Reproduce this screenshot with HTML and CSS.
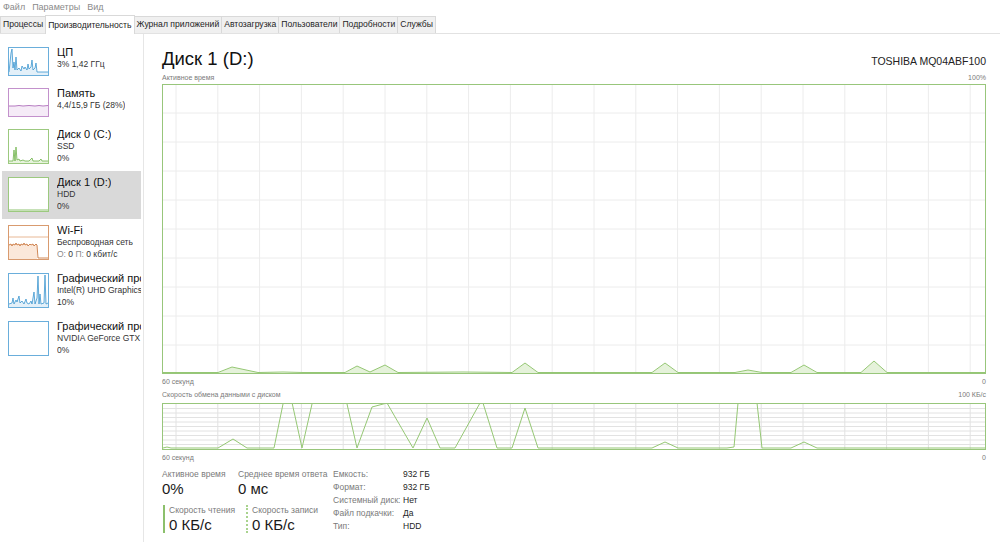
FILE: index.html
```html
<!DOCTYPE html>
<html lang="ru">
<head>
<meta charset="utf-8">
<title>Диспетчер задач</title>
<link rel="stylesheet" href="styles.css">
</head>
<body>
<div class="menubar"><span>Файл</span><span>Параметры</span><span>Вид</span></div>
<div class="tabs">
  <div class="tab">Процессы</div>
  <div class="tab active">Производительность</div>
  <div class="tab">Журнал приложений</div>
  <div class="tab">Автозагрузка</div>
  <div class="tab">Пользователи</div>
  <div class="tab">Подробности</div>
  <div class="tab">Службы</div>
</div>
<div class="main">
  <aside class="sidebar">
    <div class="item two">
      <svg class="thumb blue" width="41" height="29" viewBox="0 0 39 27" preserveAspectRatio="none">
        <path class="fill" d="M0 27 L0 24 L2 5 L3 1 L4 20 L5 14 L6 22 L7 9 L8 22 L10 20 L12 23 L13 18 L15 21 L16 19 L18 22 L19 16 L20 21 L22 19 L23 12 L24 22 L26 20 L27 15 L28 24 L31 24 L35 24 L39 24 L39 27 Z"/>
        <path class="line" d="M0 24 L2 5 L3 1 L4 20 L5 14 L6 22 L7 9 L8 22 L10 20 L12 23 L13 18 L15 21 L16 19 L18 22 L19 16 L20 21 L22 19 L23 12 L24 22 L26 20 L27 15 L28 24 L31 24 L35 24 L39 24"/>
      </svg>
      <div class="info"><div class="name">ЦП</div><div class="sub">3% 1,42 ГГц</div></div>
    </div>
    <div class="item two">
      <svg class="thumb purple" width="41" height="29" viewBox="0 0 39 27" preserveAspectRatio="none">
        <path class="fill" d="M0 27 L0 17 L6 17 L10 16.5 L14 17 L20 16.5 L26 17 L30 16.5 L34 17 L39 16.5 L39 27 Z"/>
        <path class="line" d="M0 17 L6 17 L10 16.5 L14 17 L20 16.5 L26 17 L30 16.5 L34 17 L39 16.5"/>
      </svg>
      <div class="info"><div class="name">Память</div><div class="sub">4,4/15,9 ГБ (28%)</div></div>
    </div>
    <div class="item">
      <svg class="thumb green" width="41" height="35" viewBox="0 0 39 33" preserveAspectRatio="none">
        <path class="fill" d="M0 33 L0 31 L4 31 L5 20 L6 31 L7 17 L8 30 L10 29 L11 31 L14 30 L16 31 L20 31 L23 28 L24 31 L30 31 L32 29 L33 31 L39 31 L39 33 Z"/>
        <path class="line" d="M0 31 L4 31 L5 20 L6 31 L7 17 L8 30 L10 29 L11 31 L14 30 L16 31 L20 31 L23 28 L24 31 L30 31 L32 29 L33 31 L39 31"/>
      </svg>
      <div class="info"><div class="name">Диск 0 (C:)</div><div class="sub">SSD</div><div class="sub">0%</div></div>
    </div>
    <div class="item selected">
      <svg class="thumb green" width="41" height="35" viewBox="0 0 39 33" preserveAspectRatio="none">
        <path class="line" d="M0 32 L39 32"/>
      </svg>
      <div class="info"><div class="name">Диск 1 (D:)</div><div class="sub">HDD</div><div class="sub">0%</div></div>
    </div>
    <div class="item">
      <svg class="thumb orange" width="41" height="35" viewBox="0 0 39 33" preserveAspectRatio="none">
        <path class="grid" d="M0 11 L39 11"/>
        <path class="fill" d="M0 33 L0 19 L2 18 L3 20 L4 18 L6 19 L7 17 L8 19 L10 18 L11 20 L12 18 L14 19 L15 17 L16 19 L18 18 L19 20 L21 18 L22 19 L24 18 L25 20 L27 18 L28 19 L28 33 Z"/>
        <path class="line" d="M0 19 L2 18 L3 20 L4 18 L6 19 L7 17 L8 19 L10 18 L11 20 L12 18 L14 19 L15 17 L16 19 L18 18 L19 20 L21 18 L22 19 L24 18 L25 20 L27 18 L28 19 L29 32 L39 32"/>
      </svg>
      <div class="info"><div class="name">Wi-Fi</div><div class="sub">Беспроводная сеть</div><div class="sub"><span class="dim">О:</span> 0 <span class="dim">П:</span> 0 кбит/с</div></div>
    </div>
    <div class="item">
      <svg class="thumb blue" width="41" height="35" viewBox="0 0 39 33" preserveAspectRatio="none">
        <path class="fill" d="M0 33 L0 30 L3 29 L4 24 L5 30 L7 26 L8 28 L10 22 L11 29 L13 27 L15 30 L17 25 L18 29 L20 30 L22 27 L23 30 L25 18 L26 30 L28 24 L29 2 L30 30 L31 20 L32 30 L35 29 L36 1 L37 30 L39 29 L39 33 Z"/>
        <path class="line" d="M0 30 L3 29 L4 24 L5 30 L7 26 L8 28 L10 22 L11 29 L13 27 L15 30 L17 25 L18 29 L20 30 L22 27 L23 30 L25 18 L26 30 L28 24 L29 2 L30 30 L31 20 L32 30 L35 29 L36 1 L37 30 L39 29"/>
      </svg>
      <div class="info"><div class="name">Графический процессор 0</div><div class="sub">Intel(R) UHD Graphics</div><div class="sub">10%</div></div>
    </div>
    <div class="item">
      <svg class="thumb blue" width="41" height="35" viewBox="0 0 39 33" preserveAspectRatio="none"></svg>
      <div class="info"><div class="name">Графический процессор 1</div><div class="sub">NVIDIA GeForce GTX 1650</div><div class="sub">0%</div></div>
    </div>
  </aside>

  <section class="content">
    <div class="head"><h1>Диск 1 (D:)</h1><span class="model">TOSHIBA MQ04ABF100</span></div>
    <div class="axis top"><span>Активное время</span><span>100%</span></div>
    <div class="chart big">
      <svg width="822" height="288" viewBox="0 0 822 288" preserveAspectRatio="none">
        <path class="grid" d="M13 0V288M54.8 0V288M96.6 0V288M138.4 0V288M180.2 0V288M222 0V288M263.8 0V288M305.6 0V288M347.4 0V288M389.2 0V288M431 0V288M472.8 0V288M514.6 0V288M556.4 0V288M598.2 0V288M640 0V288M681.8 0V288M723.6 0V288M765.4 0V288M807.2 0V288M0 28H822M0 57H822M0 86H822M0 115H822M0 144H822M0 173H822M0 202H822M0 231H822M0 260H822"/>
        <path class="area" d="M0 288 L55 288 L69 282 L95 287.5 L120 288 L182 288 L194 281 L207 287 L222 280 L235 288 L300 288 L349 288 L362 278 L375 288 L489 288 L502 278 L515 288 L572 288 L585 285 L599 288 L628 288 L641 280 L654 288 L698 288 L711 276 L724 288 L822 288 Z"/>
        <path class="stroke" d="M0 287.5 L55 287.5 L69 282 L95 287.5 L120 287 L140 287.5 L182 287.5 L194 281 L207 287 L222 280 L235 287.5 L300 287 L349 287.5 L362 278 L375 287.5 L489 287.5 L502 278 L515 287.5 L572 287.5 L585 285 L599 287.5 L628 287.5 L641 280 L654 287.5 L698 287.5 L711 276 L724 287.5 L822 287.5"/>
      </svg>
    </div>
    <div class="axis"><span>60 секунд</span><span>0</span></div>
    <div class="axis"><span>Скорость обмена данными с диском</span><span>100 КБ/с</span></div>
    <div class="chart small">
      <svg width="822" height="45" viewBox="0 0 822 45" preserveAspectRatio="none">
        <path class="grid" d="M13 0V45M54.8 0V45M96.6 0V45M138.4 0V45M180.2 0V45M222 0V45M263.8 0V45M305.6 0V45M347.4 0V45M389.2 0V45M431 0V45M472.8 0V45M514.6 0V45M556.4 0V45M598.2 0V45M640 0V45M681.8 0V45M723.6 0V45M765.4 0V45M807.2 0V45M0 4.5H822M0 9H822M0 13.5H822M0 18H822M0 22.5H822M0 27H822M0 31.5H822M0 36H822M0 40.5H822"/>
        <path class="stroke" d="M0 44 L4 43 L8 44 L55 44 L70 35 L84 44 L111 44 L124.5 -22 L139 44 L149 0 L167 -80 L184 0 L194 44 L209 3 L224 -1 L250 44 L264 14 L277 44 L292 44 L317 -1 L320 -1 L334 44 L349 44 L362 4 L375 44 L489 44 L502 38 L515 44 L564 44 L571 43 L575 -1 L594 -1 L599 44 L628 44 L641 38 L654 44 L822 44"/>
      </svg>
    </div>
    <div class="axis"><span>60 секунд</span><span>0</span></div>

    <div class="stats">
      <div class="metrics">
        <div class="metric"><div class="lbl">Активное время</div><div class="val">0%</div></div>
        <div class="metric"><div class="lbl">Среднее время ответа</div><div class="val">0 мс</div></div>
        <div class="metric box read"><div class="lbl">Скорость чтения</div><div class="val">0 КБ/с</div></div>
        <div class="metric box write"><div class="lbl">Скорость записи</div><div class="val">0 КБ/с</div></div>
      </div>
      <dl class="props">
        <dt>Емкость:</dt><dd>932 ГБ</dd>
        <dt>Формат:</dt><dd>932 ГБ</dd>
        <dt>Системный диск:</dt><dd>Нет</dd>
        <dt>Файл подкачки:</dt><dd>Да</dd>
        <dt>Тип:</dt><dd>HDD</dd>
      </dl>
    </div>
  </section>
</div>
</body>
</html>
```

FILE: styles.css
```css
* { box-sizing: border-box; }
html, body { margin: 0; padding: 0; }
body {
  width: 1000px;
  height: 542px;
  overflow: hidden;
  background: #fff;
  font-family: "Liberation Sans", Arial, sans-serif;
  color: #1e1e1e;
}

.menubar {
  height: 15px;
  display: flex;
  gap: 7px;
  padding-left: 3px;
  font-size: 9px;
  line-height: 15px;
  color: #8a8a8a;
}

.tabs {
  height: 19px;
  display: flex;
  align-items: flex-end;
  padding-left: 0;
  border-bottom: 1px solid #e2e2e2;
}
.tab {
  height: 17px;
  padding: 0 2px;
  font-size: 8.6px;
  line-height: 15px;
  color: #1e1e1e;
  background: #f0f0f0;
  border: 1px solid #d9d9d9;
  border-bottom: none;
  margin-right: -1px;
  white-space: nowrap;
}
.tab.active {
  height: 19px;
  line-height: 19px;
  background: #fff;
  margin-bottom: -1px;
  position: relative;
  z-index: 1;
}

.main {
  display: flex;
  height: 508px;
}

.sidebar {
  width: 144px;
  flex: none;
  padding-top: 7px;
  border-right: 1px solid #e6e6e6;
  overflow: hidden;
}
.item {
  display: flex;
  gap: 8px;
  margin: 0 2px;
  padding: 6px 0 7px 6px;
  white-space: nowrap;
  overflow: hidden;
}
.item.two { padding-bottom: 6px; }
.item.selected { background: #d9d9d9; }
.thumb {
  flex: none;
  display: block;
  background: #fff;
  border: 1px solid;
}
.thumb .line { fill: none; stroke-width: 0.8; vector-effect: non-scaling-stroke; }
.thumb .grid { fill: none; stroke-width: 1; vector-effect: non-scaling-stroke; }
.thumb.blue { border-color: #6aaedb; }
.thumb.blue .fill { fill: #e3f0f9; }
.thumb.blue .line { stroke: #3b95cf; }
.thumb.purple { border-color: #c391cc; }
.thumb.purple .fill { fill: #f5ebf7; }
.thumb.purple .line { stroke: #a35cb1; }
.thumb.green { border-color: #9cc97f; }
.thumb.green .fill { fill: #e7f3dd; }
.thumb.green .line { stroke: #6fb24a; }
.thumb.orange { border-color: #d99b6f; }
.thumb.orange .fill { fill: #fbe8da; }
.thumb.orange .line { stroke: #c4692c; }
.thumb.orange .grid { stroke: #e8b895; }

.info { margin-top: -1px; min-width: 0; overflow: hidden; }
.name {
  font-size: 11px;
  line-height: 13px;
  color: #111;
}
.sub {
  font-size: 8.5px;
  line-height: 11.5px;
  color: #333;
}
.sub .dim { color: #8a8a8a; }

.content {
  flex: 1;
  min-width: 0;
  padding: 14px 14px 0 18px;
}
.head {
  display: flex;
  justify-content: space-between;
  align-items: baseline;
}
.head h1 {
  margin: 0;
  font-size: 18.5px;
  line-height: 22px;
  font-weight: normal;
  color: #111;
}
.model {
  font-size: 10.5px;
  color: #222;
}

.axis {
  display: flex;
  justify-content: space-between;
  font-size: 7px;
  line-height: 10px;
  color: #7a7a7a;
  margin: 3px 0 3px;
}
.axis.top { margin: 3px 0 1px; }

.chart {
  border: 1px solid #98c67b;
  background: #fff;
}
.chart svg { display: block; width: 100%; }
.chart .grid { fill: none; stroke: #ececec; stroke-width: 1; }
.chart.small .grid { stroke: #e2e2e2; }
.chart .area { fill: #e5f2da; }
.chart .stroke { fill: none; stroke: #95c774; stroke-width: 1; }

.stats {
  display: flex;
  margin-top: 6px;
}
.metrics {
  display: grid;
  grid-template-columns: 76px 95px;
  row-gap: 7px;
}
.metric .lbl {
  font-size: 8.5px;
  line-height: 11px;
  color: #7a7a7a;
}
.metric .val {
  font-size: 15px;
  line-height: 18px;
  color: #1a1a1a;
}
.metric.box { padding-left: 4px; }
.metric.box .val { line-height: 17px; }
.metric.read { border-left: 2px solid #8cc06c; margin-left: 1px; }
.metric.write { border-left: 2px dotted #a9d38e; margin-left: 8px; }

.props {
  margin: 0;
  display: grid;
  grid-template-columns: 70px auto;
  font-size: 8.5px;
  line-height: 13px;
  margin-top: -1px;
}
.props dt { color: #7a7a7a; }
.props dd { margin: 0; color: #1e1e1e; }
```
